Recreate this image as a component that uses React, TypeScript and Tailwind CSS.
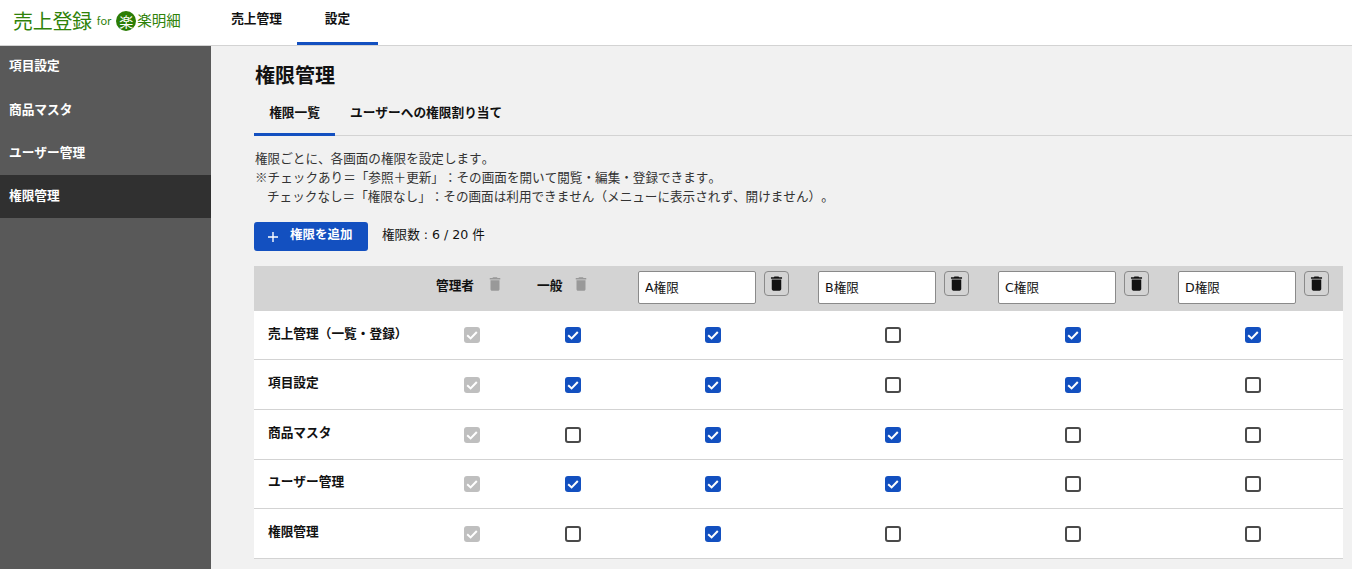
const font = "font-['Noto_Sans_CJK_JP','Liberation_Sans',sans-serif] [text-spacing-trim:space-all] [font-kerning:none]";

function TrashIcon({ className }: { className: string }) {
  return (
    <svg viewBox="0 0 24 24" className={className} fill="currentColor">
      <path d="M6 19c0 1.1.9 2 2 2h8c1.1 0 2-.9 2-2V7H6v12zM19 4h-3.5l-1-1h-5l-1 1H5v2h14V4z" />
    </svg>
  );
}

function Check({ state }: { state: 0 | 1 | 2 }) {
  if (state === 0) {
    return <span className="block h-[16px] w-[16px] rounded-[3px] border-2 border-[#4a4a4a] bg-white" />;
  }
  return (
    <span className={`flex h-[16px] w-[16px] items-center justify-center rounded-[3px] ${state === 2 ? "bg-[#bfbfbf]" : "bg-[#1350c0]"}`}>
      <svg viewBox="0 0 16 16" className="h-[16px] w-[16px]" fill="none" stroke="white" strokeWidth="2">
        <path d="M3.2 8.2 L6.6 11.4 L12.8 5" />
      </svg>
    </span>
  );
}

const rows: { name: string; v: (0 | 1 | 2)[] }[] = [
  { name: "売上管理（一覧・登録）", v: [2, 1, 1, 0, 1, 1] },
  { name: "項目設定", v: [2, 1, 1, 0, 1, 0] },
  { name: "商品マスタ", v: [2, 0, 1, 1, 0, 0] },
  { name: "ユーザー管理", v: [2, 1, 1, 1, 0, 0] },
  { name: "権限管理", v: [2, 0, 1, 0, 0, 0] },
];

const heights = ["h-[49px]", "h-[50px]", "h-[50px]", "h-[49px]", "h-[50px]"];
const labelPad = ["pb-[5px]", "pb-[5px]", "pb-[5px]", "pb-[6px]", "pb-[5px]"];
const cols = "grid grid-cols-[167px_102px_100px_180px_180px_180px_180px]";

export default function App() {
  return (
    <div className={`${font} h-[569px] w-[1352px] overflow-hidden bg-[#f1f1f1] text-[#111]`}>
      <header className="flex h-[46px] border-b border-[#d3d3d3] bg-white">
        <div className="flex w-[216px] items-center pb-[4px] pl-[13px] text-[#2f8209]">
          <span className="text-[20px] leading-none tracking-[-0.3px]">売上登録</span>
          <span className="ml-[5px] text-[11px] leading-none">for</span>
          <span className="ml-[5px] flex h-[20px] w-[20px] items-center justify-center rounded-full bg-[#2b7d05] text-[14px] leading-none text-white">楽</span>
          <span className="ml-[1px] text-[14.5px] leading-none">楽明細</span>
        </div>
        <nav className="flex text-[12.7px] font-bold">
          <div className="flex h-[45px] w-[81px] items-center justify-center pb-[9px]">売上管理</div>
          <div className="flex h-[45px] w-[81px] items-center justify-center border-b-[3px] border-[#1350c0] pb-[6px]">設定</div>
        </nav>
      </header>
      <div className="flex h-[523px]">
        <aside className="w-[211px] bg-[#595959] text-[12.7px] font-bold text-white">
          <div className="flex h-[43px] items-center pb-[6px] pl-[9px]">項目設定</div>
          <div className="flex h-[43px] items-center pb-[4px] pl-[9px]">商品マスタ</div>
          <div className="flex h-[43px] items-center pb-[4px] pl-[9px]">ユーザー管理</div>
          <div className="flex h-[43px] items-center bg-[#303030] pb-[4px] pl-[9px]">権限管理</div>
        </aside>
        <main className="flex-1">
          <h1 className="ml-[44px] mt-[15px] text-[20px] font-bold leading-[28px]">権限管理</h1>
          <div className="ml-[43px] mt-[7px] flex h-[40px] border-b border-[#d3d3d3] text-[12.7px] font-bold">
            <div className="flex h-[40px] w-[81px] items-center justify-center border-b-[3px] border-[#1350c0] pb-[6px]">権限一覧</div>
            <div className="flex h-[40px] items-center pb-[8px] pl-[15px]">ユーザーへの権限割り当て</div>
          </div>
          <div className="ml-[44px] mt-[12px] text-[12.6px] leading-[19px] text-[#333]">
            <p>権限ごとに、各画面の権限を設定します。</p>
            <p>※チェックあり＝「参照＋更新」：その画面を開いて閲覧・編集・登録できます。</p>
            <p className="pl-[12px]">チェックなし＝「権限なし」：その画面は利用できません（メニューに表示されず、開けません）。</p>
          </div>
          <div className="ml-[43px] mt-[17px] flex items-center">
            <button className="flex h-[29px] w-[114px] items-center rounded-[3px] bg-[#1350c0] pb-[4px] pl-[13px] text-[12.5px] font-bold text-white">
              <svg viewBox="0 0 12 12" className="mr-[11px] mt-[4px] h-[12px] w-[12px]" stroke="white" strokeWidth="1.4"><path d="M6 1v10M1 6h10" /></svg>
              権限を追加
            </button>
            <span className="ml-[14px] pb-[3px] font-['DejaVu_Sans','Noto_Sans_CJK_JP',sans-serif] text-[12.6px]">権限数 : 6 / 20 件</span>
          </div>
          <div className="ml-[43px] mt-[15px] w-[1089px] bg-white">
            <div className={`${cols} h-[45px] items-start bg-[#d3d3d3]`}>
              <div />
              <div className="flex h-[38px] items-center gap-[12px] pl-[15px] text-[12.7px] font-bold">
                管理者<TrashIcon className="mb-[2px] h-[18px] w-[18px] text-[#999]" />
              </div>
              <div className="flex h-[38px] items-center gap-[10px] pl-[14px] text-[12.7px] font-bold">
                一般<TrashIcon className="mb-[2px] h-[18px] w-[18px] text-[#999]" />
              </div>
              {["A権限", "B権限", "C権限", "D権限"].map((n) => (
                <div key={n} className="flex gap-[8px] pl-[15px] pt-[5px]">
                  <input readOnly value={n} className="h-[33px] w-[118px] rounded-[2px] border border-[#8a8a8a] bg-white pb-[3px] pl-[6px] font-['DejaVu_Sans','Noto_Sans_CJK_JP',sans-serif] text-[12.6px] text-[#111] outline-none" />
                  <button className="flex h-[25px] w-[25px] items-center justify-center rounded-[4px] border border-[#8a8a8a]">
                    <TrashIcon className="h-[19px] w-[19px] text-[#111]" />
                  </button>
                </div>
              ))}
            </div>
            {rows.map((r, i) => (
              <div key={r.name} className={`${cols} ${heights[i]} items-center border-b border-[#d3d3d3]`}>
                <div className={`${labelPad[i]} pl-[14px] text-[12.7px] font-bold whitespace-nowrap`}>{r.name}</div>
                {r.v.map((s, j) => (
                  <div key={j} className="flex justify-center"><Check state={s} /></div>
                ))}
              </div>
            ))}
          </div>
        </main>
      </div>
    </div>
  );
}
